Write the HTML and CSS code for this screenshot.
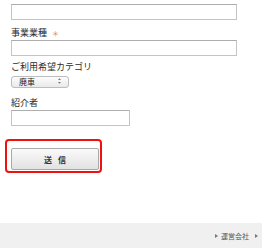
FILE: index.html
```html
<!DOCTYPE html>
<html lang="ja">
<head>
  <meta charset="UTF-8">
  <title>お問い合わせ</title>
  <link rel="stylesheet" href="styles.css">
</head>
<body>

  <form class="entry-form" onsubmit="return false;">
    <input type="text" class="text-input wide">

    <div class="field">
      <label class="field-label">事業業種<span class="req">＊</span></label>
      <input type="text" class="text-input wide">
    </div>

    <div class="field tight">
      <label class="field-label">ご利用希望カテゴリ</label>
      <span class="select-wrap">
        <select class="select-box">
          <option>廃車</option>
          <option>買取</option>
        </select>
        <svg class="select-arrow" width="5" height="8" viewBox="0 0 5 8">
          <path d="M1 3 L2.5 1.2 L4 3 Z M1 5 L2.5 6.8 L4 5 Z" fill="#777"/>
        </svg>
      </span>
    </div>

    <div class="field loose">
      <label class="field-label">紹介者</label>
      <input type="text" class="text-input short">
    </div>

    <div class="submit-area">
      <button type="submit" class="submit-btn">送 信</button>
    </div>
  </form>

  <footer class="site-footer">
    <a href="#" class="footer-link">運営会社</a>
    <span class="footer-mark"></span>
  </footer>

</body>
</html>
```

FILE: styles.css
```css
body {
  margin: 0;
  font-family: "Noto Sans CJK JP", "Noto Sans", sans-serif;
  font-size: 9px;
  color: #2b2b2b;
  background: #fff;
  width: 262px;
  height: 248px;
  display: flex;
  flex-direction: column;
}

.entry-form {
  display: flex;
  flex-direction: column;
  align-items: flex-start;
  padding: 4px 0 0 11px;
  flex: 1;
}

.text-input {
  box-sizing: border-box;
  height: 16px;
  border: 1px solid #c4c4c4;
  border-top-color: #adadad;
  background: #fff;
  margin: 0;
  padding: 0 3px;
}

.text-input.wide {
  width: 226px;
}

.text-input.short {
  width: 119px;
}

.field {
  display: flex;
  flex-direction: column;
  align-items: flex-start;
  margin-top: 7px;
}

.field.tight {
  margin-top: 5px;
}

.field.loose {
  margin-top: 9px;
}

.field-label {
  line-height: 12px;
  height: 12px;
  margin-bottom: 1px;
}

.req {
  color: #e8764f;
  font-size: 7px;
  margin-left: 5px;
}

.select-wrap {
  position: relative;
  display: inline-block;
  margin-top: 1px;
}

.select-box {
  appearance: none;
  -webkit-appearance: none;
  box-sizing: border-box;
  width: 58px;
  height: 12px;
  border: 1px solid #bdbdbd;
  border-radius: 3px;
  background: linear-gradient(#fdfdfd, #e9e9e9);
  font-family: inherit;
  font-size: 8px;
  line-height: 10px;
  color: #222;
  padding: 0 0 0 7px;
  margin: 0;
}

.select-arrow {
  position: absolute;
  right: 7px;
  top: 2px;
}

.submit-area {
  margin: 13px 0 0 -6px;
  border: 2px solid #f01010;
  border-radius: 4px;
  padding: 7px 1px 1px 4px;
}

.submit-btn {
  box-sizing: border-box;
  width: 88px;
  height: 22px;
  border: 1px solid #a9a9a9;
  border-radius: 2px;
  background: linear-gradient(#fafafa, #e2e2e2);
  font-family: inherit;
  font-size: 8px;
  font-weight: bold;
  letter-spacing: 2px;
  color: #333;
  padding: 0 0 0 2px;
  cursor: pointer;
}

.site-footer {
  height: 25px;
  background: #f0f0f0;
  display: flex;
  align-items: center;
  justify-content: flex-end;
  padding-right: 4px;
  gap: 6px;
}

.footer-link {
  color: #555;
  font-size: 7px;
  text-decoration: none;
  display: flex;
  align-items: center;
  gap: 3px;
}

.footer-link::before,
.footer-mark {
  content: "";
  width: 0;
  height: 0;
  border-top: 2px solid transparent;
  border-bottom: 2px solid transparent;
  border-left: 3px solid #777;
}
```
